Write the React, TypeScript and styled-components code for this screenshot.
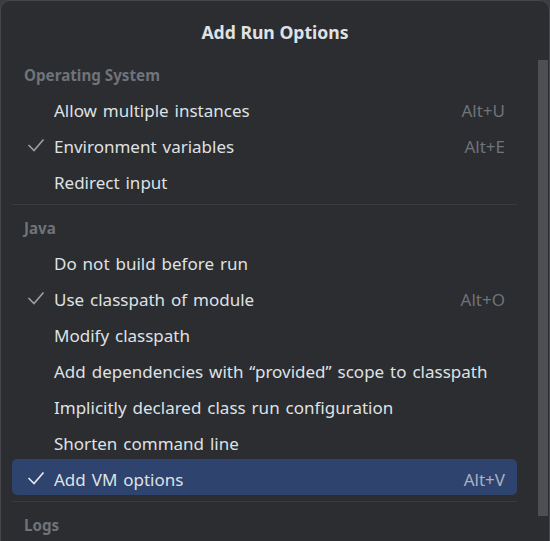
import styled, { createGlobalStyle } from "styled-components";

const GlobalStyle = createGlobalStyle`
  html, body {
    margin: 0;
    padding: 0;
    background: #3b3d41;
  }
  body {
    font-family: "Noto Sans", "Open Sans", sans-serif;
  }
`;

interface IOption {
  label: string;
  shortcut?: string;
  checked?: boolean;
  selected?: boolean;
}

interface ISection {
  title: string;
  options: IOption[];
}

const sections: ISection[] = [
  {
    title: "Operating System",
    options: [
      { label: "Allow multiple instances", shortcut: "Alt+U" },
      { label: "Environment variables", shortcut: "Alt+E", checked: true },
      { label: "Redirect input" },
    ],
  },
  {
    title: "Java",
    options: [
      { label: "Do not build before run" },
      { label: "Use classpath of module", shortcut: "Alt+O", checked: true },
      { label: "Modify classpath" },
      { label: "Add dependencies with \u201Cprovided\u201D scope to classpath" },
      { label: "Implicitly declared class run configuration" },
      { label: "Shorten command line" },
      { label: "Add VM options", shortcut: "Alt+V", checked: true, selected: true },
    ],
  },
  { title: "Logs", options: [] },
];

function Check({ selected }: { selected?: boolean }) {
  return (
    <svg width="18" height="14" viewBox="0 0 18 14">
      <polyline
        points="1.5,7 7,12.5 16.5,1.5"
        fill="none"
        stroke={selected ? "#e6e8ec" : "#9a9da3"}
        strokeWidth="1.7"
      />
    </svg>
  );
}

export default function App() {
  return (
    <>
      <GlobalStyle />
      <Popup>
        <Title>Add Run Options</Title>
        {sections.map((section, i) => (
          <div key={section.title}>
            {i > 0 && <Separator />}
            <SectionHeader>{section.title}</SectionHeader>
            {section.options.map((opt) => (
              <Row key={opt.label} selected={opt.selected}>
                <CheckCell>{opt.checked && <Check selected={opt.selected} />}</CheckCell>
                <Label>{opt.label}</Label>
                {opt.shortcut && <Shortcut selected={opt.selected}>{opt.shortcut}</Shortcut>}
              </Row>
            ))}
          </div>
        ))}
        <ScrollThumb />
      </Popup>
    </>
  );
}

const Popup = styled.div`
  position: relative;
  box-sizing: border-box;
  width: 550px;
  height: 560px;
  background: #2b2d30;
  border: 1px solid #45474c;
  border-radius: 10px;
  overflow: hidden;
  padding-right: 32px;
`;

const Title = styled.div`
  height: 55px;
  box-sizing: border-box;
  padding: 7px 0 0 32px;
  display: flex;
  align-items: center;
  justify-content: center;
  font-size: 17.6px;
  font-weight: 700;
  color: #dfe1e5;
`;

const SectionHeader = styled.div`
  height: 34px;
  box-sizing: border-box;
  padding: 3px 0 0 23px;
  display: flex;
  align-items: center;
  font-size: 15.2px;
  font-weight: 700;
  color: #6f737a;
`;

const Separator = styled.div`
  margin: 6px 0 4px 11px;
  border-top: 1px solid #393b40;
`;

interface IRow {
  selected?: boolean;
}

const Row = styled.div<IRow>`
  height: 36px;
  margin-left: 11px;
  display: flex;
  align-items: center;
  padding: 5px 12px 0 12px;
  box-sizing: border-box;
  border-radius: 5px;
  background: ${(p) => (p.selected ? "#2e436e" : "transparent")};
  font-size: 17px;
  word-spacing: 1.5px;
  color: #dfe1e5;
`;

const CheckCell = styled.div`
  width: 30px;
  margin-top: -3px;
  display: flex;
  align-items: center;
  padding-left: 3px;
  box-sizing: border-box;
`;

const Label = styled.span`
  flex: 1;
  white-space: nowrap;
`;

const Shortcut = styled.span<IRow>`
  word-spacing: 0;
  color: ${(p) => (p.selected ? "#a9b1c2" : "#6f737a")};
`;

const ScrollThumb = styled.div`
  position: absolute;
  top: 59px;
  right: 1px;
  width: 10px;
  height: 456px;
  background: #4d4f53;
`;
